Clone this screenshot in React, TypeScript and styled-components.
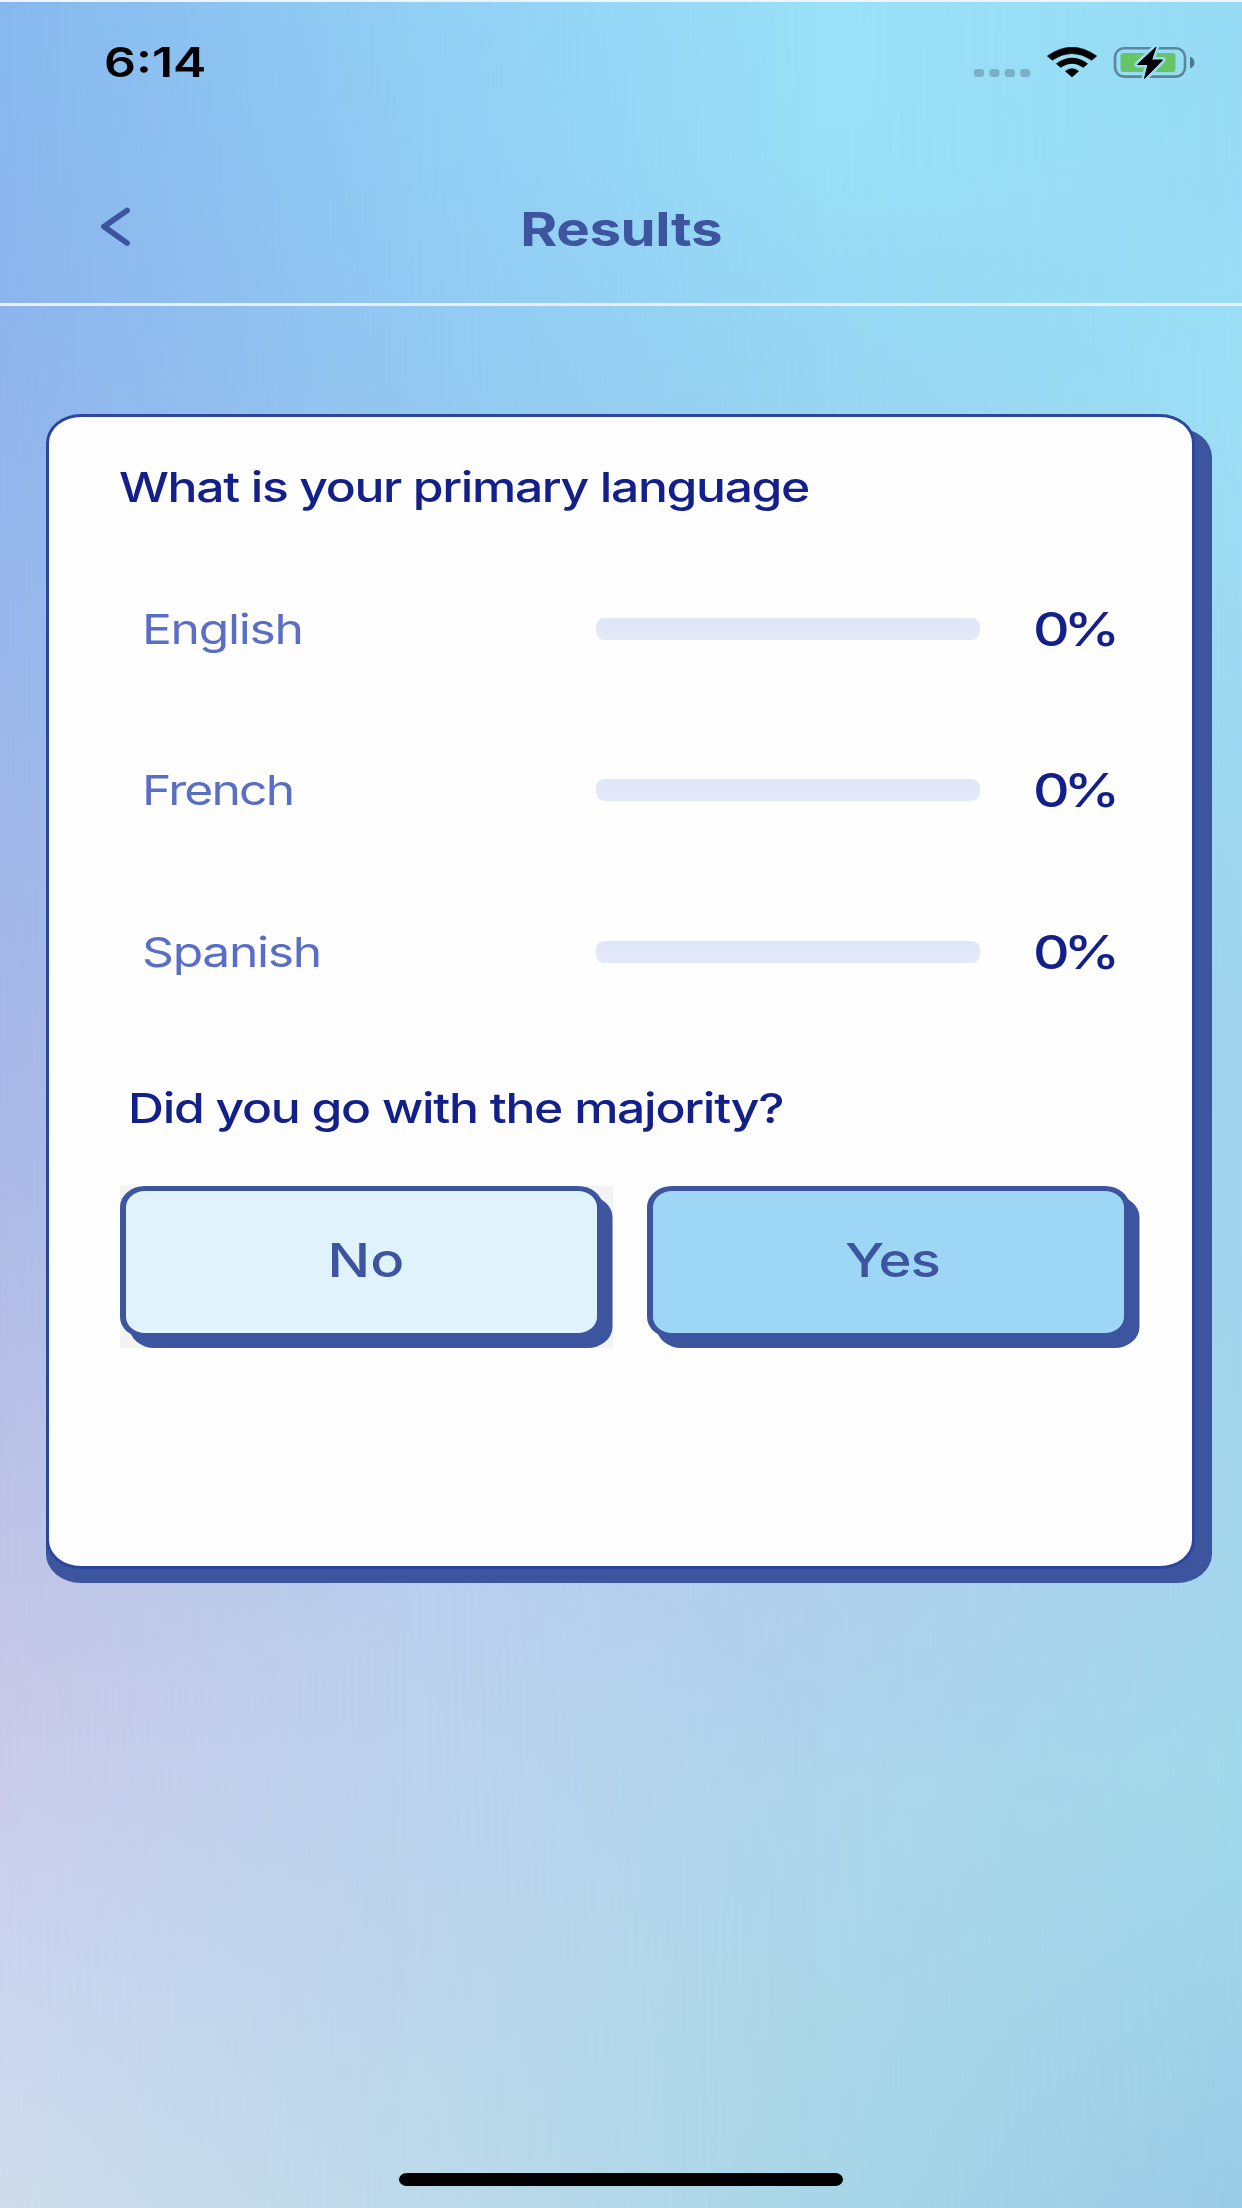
import React from "react";
import styled, { createGlobalStyle } from "styled-components";

const ink = "#3d549f";
const navy = "#14208a";

const GlobalStyle = createGlobalStyle`
  * { box-sizing: border-box; }
  body { margin: 0; font-family: Inter, "Liberation Sans", sans-serif; }
`;

const Screen = styled.main`
  position: relative;
  isolation: isolate;
  width: 1242px;
  height: 2208px;
  overflow: hidden;
  display: flex;
  flex-direction: column;
  border-top: 2px solid #eef6fd;
  background: linear-gradient(180deg, #97dcf6 0%, #98dcf5 7%, #9cdff5 18%, #a0d4ee 45%, #a4d6ec 72%, #a2d9eb 80%, #a0d5ea 88%, #9acbe6 100%);
`;

const Wash = styled.div<{ $colors: string; $from: number; $to: number }>`
  position: absolute;
  inset: 0;
  z-index: -1;
  background: linear-gradient(180deg, ${(p) => p.$colors});
  mask-image: linear-gradient(90deg, #000 ${(p) => p.$from}%, transparent ${(p) => p.$to}%);
`;

const StatusBar = styled.header`
  height: 120px;
  padding: 0 47px 0 104px;
  display: flex;
  align-items: center;
  justify-content: space-between;
`;

const StatusIcons = styled.div`
  display: flex;
  align-items: center;
`;

const Label = styled.span<{ $size: number; $weight?: number; $stretch?: number; $color: string; $origin?: string; $spacing?: number }>`
  display: block;
  white-space: nowrap;
  font-size: ${(p) => p.$size}px;
  line-height: 60px;
  font-weight: ${(p) => p.$weight ?? 500};
  color: ${(p) => p.$color};
  letter-spacing: ${(p) => p.$spacing ?? 0}px;
  transform: scaleX(${(p) => p.$stretch ?? 1.2});
  transform-origin: ${(p) => p.$origin ?? "left"} center;
`;

const NavBar = styled.nav`
  height: 184px;
  padding: 33px 99px 0;
  display: grid;
  grid-template-columns: 32px 1fr 32px;
  align-items: start;
  justify-items: center;
  border-bottom: 3px solid #efedf0;
`;

const BackButton = styled.button`
  border: 0;
  padding: 0;
  margin-top: 52px;
  background: none;
  line-height: 0;
`;

const Heading = styled.h1`
  margin: 44px 0 0;
`;

const Card = styled.section`
  width: 1149px;
  height: 1155px;
  margin: 108px 0 0 46px;
  padding: 40px 0 0 71px;
  background: #fefefe;
  border: 3px solid #2c469c;
  border-radius: 35px / 29px;
  box-shadow: 0 14px 0 ${ink}, 17px 14px 0 ${ink};
`;

const Title = styled.div`
  margin-left: -1px;
`;

const Options = styled.ul`
  list-style: none;
  margin: 31px 0 0;
  padding: 0 0 0 22px;
`;

const Option = styled.li`
  height: 161.6px;
  display: grid;
  grid-template-columns: 454px 384px 1fr;
  align-items: center;
`;

const Track = styled.div`
  height: 22px;
  border-radius: 9px / 8px;
  background: linear-gradient(#dfe6f5, #e4eafa);
  overflow: hidden;
`;

const Fill = styled.div`
  height: 100%;
  background: ${ink};
`;

const Percent = styled.div`
  padding-left: 53px;
`;

const Question = styled.div`
  padding: 45px 0 0 8px;
`;

const Answers = styled.div`
  display: flex;
  gap: 34px;
  margin-top: 48px;
`;

const AnswerFrame = styled.div<{ $tint: string }>`
  width: 492.5px;
  height: 162px;
  background: ${(p) => p.$tint};
`;

const Answer = styled.button<{ $fill: string }>`
  width: 483px;
  height: 152px;
  padding: 0 0 3px 8px;
  display: flex;
  align-items: center;
  justify-content: center;
  background: ${(p) => p.$fill};
  border: solid ${ink};
  border-width: 5px 6px;
  border-radius: 25px / 21px;
  box-shadow: 9.5px 10px 0 ${ink};
  font-family: inherit;
`;

const HomeIndicator = styled.div`
  width: 444px;
  height: 13px;
  margin: auto 399px 22px;
  border-radius: 8px / 7px;
  background: #000;
`;

const rows = [
  { name: "English", share: 0, tracking: -1.1 },
  { name: "French", share: 0, tracking: -1.5 },
  { name: "Spanish", share: 0, tracking: -1.1 },
];

const Signal = () => (
  <svg width="58" height="34" viewBox="0 0 58 34" fill="#7ab0c6">
    {[0, 15.4, 30.8, 46.2].map((x) => (
      <rect key={x} x={x} y="24" width="10" height="8" rx="3" />
    ))}
  </svg>
);

const Wifi = () => (
  <svg width="50" height="31" viewBox="0 0 50 31" style={{ marginLeft: 15 }}>
    <path d="M0.300 9Q25 -8.600 49.700 9L44.800 13.200Q25 -0.200 5.200 13.200Z" stroke="#000" strokeWidth="0.600" strokeLinejoin="round" />
    <path d="M9 16.700Q25 5 41 16.700L36.200 20.800Q25 12.800 13.800 20.800Z" />
    <path d="M18 24.200Q25 18.400 32 24.200L25 30.200Z" />
  </svg>
);

const Battery = () => (
  <svg width="82" height="35" viewBox="0 0 82 35" style={{ marginLeft: 16 }}>
    <rect x="2" y="3.200" width="70" height="28.400" rx="9" fill="none" stroke="#5d8798" strokeWidth="2.600" />
    <rect x="7.500" y="8" width="55" height="19" rx="3" fill="#67c467" />
    <path d="M77 11.500Q81.500 13.500 81.500 17.500Q81.500 21.500 77 23.500Z" fill="#4f7888" />
    <path d="M43 2L24.500 19.500H35L31.500 33.500L49.500 15H38.500Z" fill="#000" stroke="#98dcf6" strokeWidth="6" strokeLinejoin="round" paintOrder="stroke" />
    <path d="M43 2L24.500 19.500H35L31.500 33.500L49.500 15H38.500Z" stroke="#000" strokeWidth="1" strokeLinejoin="round" />
  </svg>
);

export default function App() {
  return (
    <>
      <GlobalStyle />
      <Screen>
        <Wash $from={66} $to={100} $colors="#99e0f8 0%, #99dff7 7%, #97d8f4 14%, #98d4f1 20%, #a4d2ee 45%, #b1d0ee 72%, #add5eb 82%, #abd6e8 91%, #a8d6e8 100%" />
        <Wash $from={33} $to={66} $colors="#91cff5 0%, #92c9f3 14%, #94c7ef 20%, #a5c8ec 45%, #bacfed 73%, #bcd4ec 86%, #bddaea 100%" />
        <Wash $from={0} $to={33} $colors="#86b8ee 0%, #8db4ec 14%, #a0b7e9 38%, #abb8e7 52%, #bfc4e6 70%, #c8c8e8 77%, #cacfed 84%, #cbd6ef 91%, #cfdcea 100%" />
        <StatusBar>
          <Label $size={41} $weight={600} $stretch={1.22} $color="#000">6:14</Label>
          <StatusIcons>
            <Signal />
            <Wifi />
            <Battery />
          </StatusIcons>
        </StatusBar>
        <NavBar>
          <BackButton aria-label="Back">
            <svg width="32" height="40" viewBox="0 0 32 40" fill="none" stroke={ink} strokeWidth="5.800" strokeLinecap="round" strokeLinejoin="round">
              <path d="M28 3.500L5 19.700L28 36" />
            </svg>
          </BackButton>
          <Heading>
            <Label $size={47} $weight={700} $stretch={1.2} $spacing={-0.3} $color={ink} $origin="center">Results</Label>
          </Heading>
        </NavBar>
        <Card>
          <Title>
            <Label $size={41.5} $spacing={-1.12} $color={navy}>What is your primary language</Label>
          </Title>
          <Options>
            {rows.map((r) => (
              <Option key={r.name}>
                <Label $size={41.5} $weight={400} $spacing={r.tracking} $color="#5b6ec6">{r.name}</Label>
                <Track><Fill style={{ width: `${r.share}%` }} /></Track>
                <Percent>
                  <Label $size={47} $stretch={1.21} $spacing={-5} $color={navy}>{r.share}%</Label>
                </Percent>
              </Option>
            ))}
          </Options>
          <Question>
            <Label $size={41.5} $spacing={-1.05} $color={navy}>Did you go with the majority?</Label>
          </Question>
          <Answers>
            <AnswerFrame $tint="#f3f3f4">
              <Answer $fill="#e0f3fd">
                <Label $size={47} $color={ink} $origin="center">No</Label>
              </Answer>
            </AnswerFrame>
            <AnswerFrame $tint="transparent">
              <Answer $fill="#9dd7f5">
                <Label $size={47} $spacing={-0.9} $color={ink} $origin="center">Yes</Label>
              </Answer>
            </AnswerFrame>
          </Answers>
        </Card>
        <HomeIndicator />
      </Screen>
    </>
  );
}
